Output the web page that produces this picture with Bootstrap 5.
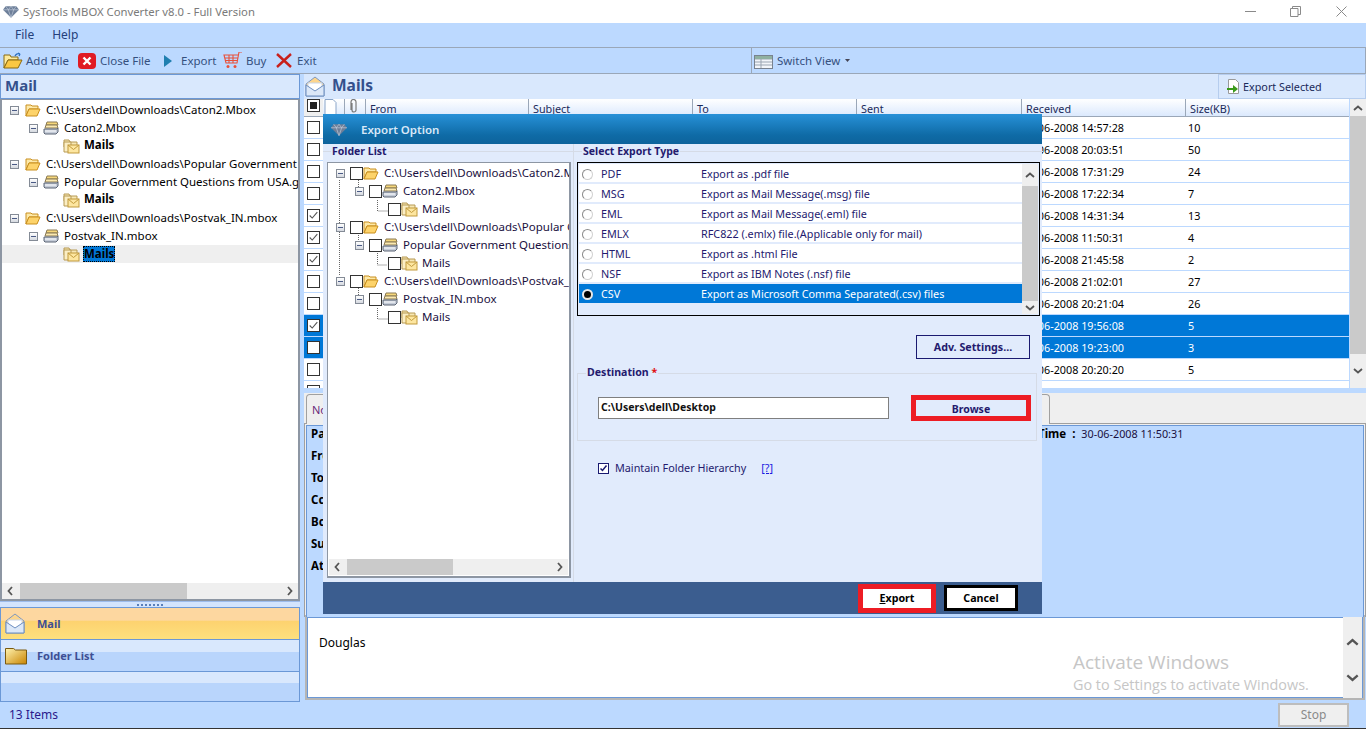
<!DOCTYPE html>
<html lang="en">
<head>
<meta charset="UTF-8">
<title>SysTools MBOX Converter v8.0 - Full Version</title>
<link href="https://cdn.jsdelivr.net/npm/bootstrap@5.3.0/dist/css/bootstrap.min.css" rel="stylesheet">
<style>
html, body { margin: 0; height: 729px; overflow: hidden; }
body { width: 1366px; position: relative; font-family: "Noto Sans", "Open Sans", sans-serif; font-size: 12px; line-height: 16px; color: #000; background: #bcd9ff; }
svg { display: block; flex: none; }
.tt { white-space: nowrap; }

.win-title { height: 23px; background: #fff; color: #7a7a7a; padding-left: 3px; font-size: 11.3px; }
.win-title .nm { margin-left: 4px; }
.win-btns { margin-left: auto; padding-right: 19px; }
.win-menu { height: 24px; color: #25407a; padding-left: 15px; gap: 18px; }
.win-tools { height: 27px; border: 1px solid #9aa7b8; border-left: 0; color: #35507e; padding-left: 3px; font-size: 11.5px; }
.tool-item { gap: 3px; }
.switch-view { gap: 4px; height: 100%; border-left: 1px solid #9aa7b8; padding-left: 2px; }
.win-main { height: 628px; }
.win-status { height: 27px; border-bottom: 1px solid #333; color: #2a1a8c; padding-left: 9px; }
.stop-btn { width: 71px; height: 24px; margin-left: auto; margin-right: 17px; background: #efefef; border: 2px solid #bdbdbd; color: #8a8a8a; text-align: center; line-height: 20px; }

.side-pane { width: 300px; flex: none; }
.pane-head { height: 25px; background: #d9e8fd; color: #34508c; font-weight: 700; font-size: 15px; line-height: 20px; }
.side-pane .pane-head { border: 1px solid #6b98d6; padding-left: 4px; }
.tree-box { height: 502px; background: #fff; border: 2px solid #8d96a3; border-top-width: 1px; padding-top: 1px; overflow: hidden; position: relative; font-size: 11.5px; }
.tree-rows { height: 482px; }
.trow { height: 18px; white-space: nowrap; overflow: hidden; }
.trow .exp { margin-left: 8px; }
.trow .lbl { margin-left: 5px; }
.lv2 { padding-left: 19px; }
.lv2 .exp { margin-right: 5px; }
.lv3 { padding-left: 61px; }
.trow.sel { background: #efefef; }
.trow b { font-weight: 700; padding: 0 1px; margin-left: 3px; margin-top: -2px; }
.trow.sel b { background: #0078d7; outline: 1px dotted #000; outline-offset: -1px; margin-top: 0; }
.exp { width: 9px; height: 9px; border: 1px solid #848b96; background: linear-gradient(#fff, #d5d9e0); position: relative; flex: none; margin-right: 6px; }
.exp::after { content: ""; position: absolute; left: 1px; right: 1px; top: 3px; height: 1px; background: #4a5a85; }
.scroll-h { height: 16px; background: #efefef; padding: 0 5px; }
.scroll-h .thumb { height: 100%; background: #cacaca; }
.splitter { height: 7px; background: #d3e4fd; border-top: 1px solid #9dbcec; border-bottom: 1px solid #6b98d6; gap: 2px; }
.splitter i { width: 2px; height: 2px; background: #5a7fb8; }
.nav-mail, .nav-folder { height: 32px; border: 1px solid #6b98d6; border-top: 0; padding-left: 4px; color: #3e4f94; font-weight: 700; gap: 12px; font-size: 11px; }
.nav-folder { gap: 10px; }
.nav-mail { background: linear-gradient(#fdd7a0 0, #fdd7a0 40%, #fdd26f 41%, #fde07e 100%); }
.nav-folder { background: linear-gradient(#d9e8fd 0, #d9e8fd 38%, #b9d5fc 39%, #b9d5fc 100%); }
.nav-blank { height: 30px; border: 1px solid #6b98d6; border-top: 0; background: linear-gradient(#d9e8fd 0, #d9e8fd 38%, #b9d5fc 39%, #b9d5fc 100%); }

.main-pane { width: 1062px; margin-left: 4px; flex: none; }
.main-pane .pane-head { padding-left: 1px; gap: 7px; font-size: 15.5px; }
.main-pane .pane-head > span { margin-top: -3px; }
.exp-sel { margin-left: auto; width: 148px; height: 100%; border: 1px solid #b6cdee; font-size: 10.8px; font-weight: 400; color: #1a2a5a; padding-left: 7px; gap: 2px; }
.grid-wrap { height: 289px; }
.mail-grid { width: 1046px; overflow: hidden; background: #fff; font-size: 10.8px; }
.ghead { height: 18px; background: linear-gradient(#fff, #dbe9fd); border-bottom: 1px solid #9aa7b8; color: #1a2a5a; line-height: 20px; }
.gc { height: 100%; border-left: 1px solid #9aa7b8; padding-left: 4px; white-space: nowrap; flex: none; }
.gc0 { width: 19px; border: 0; padding-left: 3px; background: #efefef; }
.mrow { height: 22px; border-bottom: 1px solid #bcd9ff; white-space: nowrap; }
.mrow .cbcell { width: 18px; flex: none; height: 100%; padding-left: 3px; }
.mrow .rcv { margin-left: 700px; width: 166px; flex: none; }
.mrow.pick { background: #0078d7; color: #fff; }
.mrow.pick .cbcell { background: #0078d7; }
.cbox { width: 13px; height: 13px; background: #fff; border: 1px solid #333; flex: none; }
.scroll-v { width: 16px; background: #efefef; flex: none; }
.scroll-v .thumb { background: #cacaca; flex: 1; }
.scroll-v .ar { height: 17px; }
.pane-gap { height: 5px; }
.tab-strip { height: 30px; background: #efefef; position: relative; color: #6a2a7a; font-size: 11px; }
.tab-one { position: absolute; left: 2px; top: 1px; width: 744px; height: 30px; background: #efefef; border: 1px solid #a0a0a0; border-bottom: 0; border-radius: 4px 4px 0 0; padding: 7px 0 0 5px; }
.info-frame { height: 194px; border: 1px solid #a0a0a0; border-bottom: 0; padding: 1px 1px 0; background: #efefef; }
.info-box { height: 100%; background: #bcd9ff; border: 1px solid #6b98d6; border-bottom: 0; padding: 0 0 0 4px; font-weight: 700; position: relative; font-size: 11.5px; }
.info-box p { margin: 0; height: 22px; line-height: 16px; }
.info-time { position: absolute; top: 0; left: 731px; white-space: nowrap; }
.info-time span { font-weight: 400; color: #1a1040; font-size: 10.8px; }
.body-box { height: 81px; background: #fff; border: 1px solid #6b98d6; outline: 2px solid #b5b5b5; margin: 0 3px 0 3px; padding: 17px 0 0 11px; font-size: 12px; }
.body-scroll { width: 19px; background: #efefef; position: absolute; right: 4px; top: 617px; height: 81px; }
.watermark { position: absolute; left: 1073px; top: 650px; color: #c6c6c6; font-family: "Open Sans", sans-serif; white-space: nowrap; }
.watermark div:first-child { font-size: 19px; line-height: 24px; }
.watermark div:last-child { font-size: 14.4px; line-height: 22px; }

.dlg { position: absolute; left: 323px; top: 114px; width: 719px; height: 500px; background: #e1ebfc; color: #241a6e; font-size: 10.8px; }
.dlg-head { height: 30px; background: linear-gradient(#2791d8, #0f6ba6 70%, #0d639c); color: #d8e8f8; font-weight: 600; font-size: 11.5px; padding: 2px 0 0 8px; gap: 14px; }
.dlg-body { height: 438px; }
.dlg-left { width: 251px; flex: none; position: relative; padding: 18px 0 0 4px; border-right: 1px solid #d5dbe6; height: 100%; }
.dlg-right { flex: 1; position: relative; padding: 18px 3px 0 3px; }
.lgd { position: absolute; top: 0; height: 14px; line-height: 14px; font-weight: 700; background: #e1ebfc; padding: 0 1px; font-size: 10.5px; white-space: nowrap; }
.rule { position: absolute; top: 7px; left: 0; right: 0; height: 1px; background: #d5dbe6; }
.dtree { width: 244px; height: 416px; background: #fff; border: 2px solid #8d96a3; border-width: 1px 2px 2px 1px; position: relative; padding-top: 1px; color: #1a1040; overflow: hidden; font-size: 11.5px; }
.drow { height: 18px; white-space: nowrap; overflow: hidden; position: relative; z-index: 1; }
.d1 { padding-left: 8px; }
.d2 { padding-left: 27px; }
.d3 { padding-left: 60px; }
.drow .exp { margin-right: 5px; }
.dtree .tt { margin-left: 5px; }
.tree-lines { position: absolute; left: 0; top: 0; }
.type-box { height: 154px; width: 463px; background: #e1ebfc; border: 1px solid #000; padding: 1px; }
.type-rows { flex: 1; }
.trow-x { height: 20px; background: #fff; border-bottom: 2px solid #e1ebfc; padding: 2px 0 0 3px; color: #241a6e; }
.trow-x .code { margin-left: 8px; width: 100px; flex: none; }
.trow-x.sel { background: #0078d7; color: #fff; height: 19px; border: 0; padding-top: 1px; }
.rb { width: 11px; height: 11px; border-radius: 50%; background: #fff; border: 1px solid #8a8a8a; border-bottom-color: #d0d0d0; border-right-color: #d0d0d0; flex: none; }
.trow-x.sel .rb { width: 11px; height: 11px; border: 2px solid #e8e8e8; background: #000; }
.adv-row { height: 62px; padding: 19px 9px 0 0; }
.adv-btn, .br-btn { font-weight: 700; text-align: center; background: #e1ebfc; }
.adv-btn { width: 114px; height: 24px; border: 1px solid #1a1a70; line-height: 22px; font-size: 10.7px; margin-right: 1px; }
.dest-set { width: 460px; height: 68px; border: 1px solid #d5dbe6; position: relative; padding: 23px 0 0 20px; margin-top: -5px; }
.dest-set .lgd { top: -9px; left: 8px; font-size: 10.6px; }
.dest-in { width: 291px; height: 22px; background: #fff; border: 1px solid #7f7f7f; font-weight: 700; color: #111; padding-left: 2px; line-height: 19px; font-size: 10.5px; }
.br-btn { width: 120px; height: 26px; margin-left: 22px; margin-top: -2px; border: 5px solid #ed1c24; line-height: 18px; font-size: 10.5px; }
.req { color: #e01010; }
.keep-row { padding: 19px 0 0 21px; gap: 6px; }
.keep-cb { width: 11px; height: 11px; background: #fff; border: 1px solid #1a1a70; flex: none; }
.help-lnk { color: #1a1ae0; text-decoration: underline; margin-left: 9px; }
.dlg-foot { height: 32px; background: #3b5d8f; padding-right: 24px; color: #000; font-weight: 700; font-size: 10.7px; }
.ex-btn { width: 78px; height: 29px; border: 5px solid #ed1c24; background: #fff; text-align: center; line-height: 19px; }
.can-btn { width: 74px; height: 26px; border: 3px solid #000; background: #fff; text-align: center; line-height: 20px; margin-left: 8px; }
</style>
</head>
<body>
<svg width="0" height="0" style="position:absolute">
  <defs>
    <symbol id="ic-open" viewBox="0 0 16 14"><path d="M1 2h5l1 1h6v3H4L1 13z" fill="#fde9a8" stroke="#c98f1e"/><path d="M1 13 4 6h11l-3 7z" fill="#fdd36a" stroke="#c98f1e"/></symbol>
    <symbol id="ic-stack" viewBox="0 0 16 14"><path d="M4 1h10l1 3H3z" fill="#f6d77a" stroke="#8a7a55"/><path d="M3 4h11l1 3H2z" fill="#fbe9b0" stroke="#8a7a55"/><path d="M1 8h13l1-1v4l-2 2H2l-1-1z" fill="#c5ccd8" stroke="#5b6474"/><path d="M2 10h11" stroke="#fff"/></symbol>
    <symbol id="ic-mailf" viewBox="0 0 17 15"><path d="M1 1h5l1 2h7v5H1z" fill="#f6e7b4" stroke="#b79a55"/><path d="M1 3v10h7V3z" fill="#fbeec4" stroke="#b79a55"/><rect x="5" y="6" width="11" height="8" fill="#fde6a0" stroke="#c19a3c"/><path d="m5 6 5.500 4.500L16 6" fill="none" stroke="#c19a3c"/></symbol>
    <symbol id="ic-env" viewBox="0 0 20 21"><path d="M1 8 10 1l9 7v12H1z" fill="#fdd58c" stroke="#7d97c0"/><path d="M3 7h14v6l-7 4-7-4z" fill="#fff" stroke="#c9d6ea"/><path d="M1 20V9l9 6 9-6v11z" fill="#dce8f8" stroke="#6c8ec0"/></symbol>
    <symbol id="ic-gem" viewBox="0 0 18 15"><path d="M3 1h12l3 4-9 9-9-9z" fill="#6d7f99"/><path d="M3 1 6 5l3-4 3 4 3-4M0 5h18M6 5l3 9 3-9" fill="none" stroke="#c6d0de" stroke-width=".7"/></symbol>
    <symbol id="ic-chk" viewBox="0 0 13 13"><path d="m2 6.500 3 3 6-7" fill="none" stroke="#555" stroke-width="1.300"/></symbol>
    <symbol id="ic-up" viewBox="0 0 10 6"><path d="M1 5 5 1.500 9 5" fill="none" stroke="#555" stroke-width="1.800"/></symbol>
    <symbol id="ic-dn" viewBox="0 0 10 6"><path d="M1 1l4 3.500L9 1" fill="none" stroke="#555" stroke-width="1.800"/></symbol>
    <symbol id="ic-lf" viewBox="0 0 6 10"><path d="M5 1 1.500 5 5 9" fill="none" stroke="#555" stroke-width="1.800"/></symbol>
    <symbol id="ic-rt" viewBox="0 0 6 10"><path d="M1 1l3.500 4L1 9" fill="none" stroke="#555" stroke-width="1.800"/></symbol>
  </defs>
</svg>

<div class="win-title d-flex align-items-center">
  <svg width="16" height="14"><use href="#ic-gem"/></svg>
  <span class="nm tt">SysTools MBOX Converter v8.0 - Full Version</span>
  <div class="win-btns d-flex align-items-center">
    <svg width="11" height="11" viewBox="0 0 11 11"><path d="M0 5.500h11" stroke="#8a8a8a"/></svg>
    <svg width="11" height="11" viewBox="0 0 11 11" style="margin-left:34px"><path d="M.5 2.500h7.500v8H.5zM2.500 2.500v-2h8v8H8" fill="none" stroke="#8a8a8a"/></svg>
    <svg width="11" height="11" viewBox="0 0 11 11" style="margin-left:35px"><path d="m.5.500 10 10m0-10-10 10" stroke="#8a8a8a"/></svg>
  </div>
</div>

<div class="win-menu d-flex align-items-center"><span>File</span><span>Help</span></div>

<div class="win-tools d-flex align-items-center">
  <div class="tool-item d-flex align-items-center" style="width:75px">
    <svg width="20" height="17" viewBox="0 0 20 17"><path d="M1 3h6l1 2h7v3H5l-4 8z" fill="#fdea9c" stroke="#8a6a12"/><path d="M1 16 5 8h14l-4 8z" fill="#fbc843" stroke="#8a6a12"/><path d="M12 4c1-2 3-3 5-2m0 0-2-1m2 1-1 2" fill="none" stroke="#2a6ec0" stroke-width="1.300"/></svg>
    <span class="tt">Add File</span>
  </div>
  <div class="tool-item d-flex align-items-center" style="width:86px;gap:4px">
    <svg width="18" height="16" viewBox="0 0 18 16"><rect width="18" height="16" rx="4" fill="#e01b24"/><path d="m5.500 4.500 7 7m0-7-7 7" stroke="#fff" stroke-width="2.400"/></svg>
    <span class="tt">Close File</span>
  </div>
  <div class="tool-item d-flex align-items-center" style="width:59px;gap:9px">
    <svg width="8" height="12" viewBox="0 0 8 12"><path d="M0 0 8 6 0 12z" fill="#1f7fb0"/></svg>
    <span class="tt">Export</span>
  </div>
  <div class="tool-item d-flex align-items-center" style="width:53px">
    <svg width="20" height="17" viewBox="0 0 20 17"><path d="M19 0h-3l-2 11H3L1 3h14M2 6h12.500M2.500 8.500H14M6 3v8M10 3v8" fill="none" stroke="#e8503a" stroke-width="1.100"/><circle cx="5" cy="14.500" r="1.500" fill="#e8503a"/><circle cx="12" cy="14.500" r="1.500" fill="#e8503a"/></svg>
    <span class="tt">Buy</span>
  </div>
  <div class="tool-item d-flex align-items-center" style="width:475px;gap:5px">
    <svg width="16" height="15" viewBox="0 0 16 15"><path d="m1 1 14 13m0-13L1 14" stroke="#c8201c" stroke-width="2.400"/></svg>
    <span class="tt">Exit</span>
  </div>
  <div class="switch-view d-flex align-items-center">
    <svg width="19" height="16" viewBox="0 0 19 16"><rect x=".5" y="2.500" width="18" height="13" fill="#f2f5f9" stroke="#78828f"/><path d="M1 6h17M7 3v12M1 9h17M1 12h17" stroke="#9aa5b2"/><rect x="1" y="3" width="17" height="3" fill="#8fb0a0"/></svg>
    <span class="tt">Switch View</span>
    <svg width="5" height="3" viewBox="0 0 5 3" style="margin-left:1px"><path d="M0 0h5L2.500 3z" fill="#445"/></svg>
  </div>
</div>

<div class="win-main d-flex">
  <div class="side-pane">
    <div class="pane-head">Mail</div>
    <div class="tree-box">
      <div class="tree-rows">
        <div class="trow d-flex align-items-center"><span class="exp"></span><svg width="16" height="14"><use href="#ic-open"/></svg><span class="lbl">C:\Users\dell\Downloads\Caton2.Mbox</span></div>
        <div class="trow lv2 d-flex align-items-center"><span class="exp"></span><svg width="16" height="14"><use href="#ic-stack"/></svg><span class="lbl">Caton2.Mbox</span></div>
        <div class="trow lv3 d-flex align-items-center"><svg width="17" height="15"><use href="#ic-mailf"/></svg><b>Mails</b></div>
        <div class="trow d-flex align-items-center"><span class="exp"></span><svg width="16" height="14"><use href="#ic-open"/></svg><span class="lbl">C:\Users\dell\Downloads\Popular Government Questions from USA.gov.mbox</span></div>
        <div class="trow lv2 d-flex align-items-center"><span class="exp"></span><svg width="16" height="14"><use href="#ic-stack"/></svg><span class="lbl">Popular Government Questions from USA.gov.mbox</span></div>
        <div class="trow lv3 d-flex align-items-center"><svg width="17" height="15"><use href="#ic-mailf"/></svg><b>Mails</b></div>
        <div class="trow d-flex align-items-center"><span class="exp"></span><svg width="16" height="14"><use href="#ic-open"/></svg><span class="lbl">C:\Users\dell\Downloads\Postvak_IN.mbox</span></div>
        <div class="trow lv2 d-flex align-items-center"><span class="exp"></span><svg width="16" height="14"><use href="#ic-stack"/></svg><span class="lbl">Postvak_IN.mbox</span></div>
        <div class="trow lv3 sel d-flex align-items-center"><svg width="17" height="15"><use href="#ic-mailf"/></svg><b>Mails</b></div>
      </div>
      <div class="scroll-h d-flex align-items-center">
        <svg width="6" height="10"><use href="#ic-lf"/></svg>
        <div class="thumb" style="width:167px;margin-left:7px"></div>
        <svg width="6" height="10" class="ms-auto"><use href="#ic-rt"/></svg>
      </div>
    </div>
    <div class="splitter d-flex justify-content-center align-items-center"><i></i><i></i><i></i><i></i><i></i><i></i><i></i></div>
    <div class="nav-mail d-flex align-items-center"><svg width="20" height="21"><use href="#ic-env"/></svg><span>Mail</span></div>
    <div class="nav-folder d-flex align-items-center">
      <svg width="22" height="18" viewBox="0 0 22 18"><path d="M.5 3V1.500h8l2 1.500h11v14H.5z" fill="url(#fg)" stroke="#7a5a10"/><defs><linearGradient id="fg" x1="0" y1="0" x2="1" y2="1"><stop offset="0" stop-color="#fff3b0"/><stop offset="1" stop-color="#c98400"/></linearGradient></defs></svg>
      <span>Folder List</span>
    </div>
    <div class="nav-blank"></div>
  </div>

  <div class="main-pane">
    <div class="pane-head d-flex align-items-center">
      <svg width="20" height="21"><use href="#ic-env"/></svg><span>Mails</span>
      <div class="exp-sel d-flex align-items-center">
        <svg width="15" height="15" viewBox="0 0 15 15"><path d="M2.500.500h7l3 3v11h-10z" fill="#fff" stroke="#9a9a9a"/><path d="M1 9h6V6l5 4-5 4v-3H1z" fill="#3a9a1a"/></svg>
        <span class="tt">Export Selected</span>
      </div>
    </div>
    <div class="grid-wrap d-flex">
      <div class="mail-grid">
        <div class="ghead d-flex">
          <div class="gc gc0"><span class="cbox d-flex align-items-center justify-content-center"><svg width="7" height="7"><rect width="7" height="7" fill="#222"/></svg></span></div>
          <div class="gc" style="width:21px;border:0;padding-left:1px"><svg width="13" height="16" viewBox="0 0 13 16"><path d="M1 .500h8l3 3v12H1z" fill="#fff" stroke="#8aa5c8"/></svg></div>
          <div class="gc" style="width:21px;padding-left:4px"><svg width="10" height="15" viewBox="0 0 10 15"><path d="M3 4v7a2 2 0 0 0 4 0V3a2.500 2.500 0 0 0-5 0v8" fill="none" stroke="#7b7b7b" stroke-width="1.200"/></svg></div>
          <div class="gc" style="width:163px">From</div>
          <div class="gc" style="width:164px">Subject</div>
          <div class="gc" style="width:164px">To</div>
          <div class="gc" style="width:165px">Sent</div>
          <div class="gc" style="width:164px">Received</div>
          <div class="gc" style="width:165px;border-right:0">Size(KB)</div>
        </div>
        <div class="mrow d-flex align-items-center"><span class="cbcell d-flex align-items-center"><span class="cbox"></span></span><span class="rcv">30-06-2008 14:57:28</span><span>10</span></div>
        <div class="mrow d-flex align-items-center"><span class="cbcell d-flex align-items-center"><span class="cbox"></span></span><span class="rcv">30-06-2008 20:03:51</span><span>50</span></div>
        <div class="mrow d-flex align-items-center"><span class="cbcell d-flex align-items-center"><span class="cbox"></span></span><span class="rcv">30-06-2008 17:31:29</span><span>24</span></div>
        <div class="mrow d-flex align-items-center"><span class="cbcell d-flex align-items-center"><span class="cbox"></span></span><span class="rcv">30-06-2008 17:22:34</span><span>7</span></div>
        <div class="mrow d-flex align-items-center"><span class="cbcell d-flex align-items-center"><span class="cbox"><svg width="11" height="11"><use href="#ic-chk"/></svg></span></span><span class="rcv">30-06-2008 14:31:34</span><span>13</span></div>
        <div class="mrow d-flex align-items-center"><span class="cbcell d-flex align-items-center"><span class="cbox"><svg width="11" height="11"><use href="#ic-chk"/></svg></span></span><span class="rcv">30-06-2008 11:50:31</span><span>4</span></div>
        <div class="mrow d-flex align-items-center"><span class="cbcell d-flex align-items-center"><span class="cbox"><svg width="11" height="11"><use href="#ic-chk"/></svg></span></span><span class="rcv">30-06-2008 21:45:58</span><span>2</span></div>
        <div class="mrow d-flex align-items-center"><span class="cbcell d-flex align-items-center"><span class="cbox"></span></span><span class="rcv">30-06-2008 21:02:01</span><span>27</span></div>
        <div class="mrow d-flex align-items-center"><span class="cbcell d-flex align-items-center"><span class="cbox"></span></span><span class="rcv">30-06-2008 20:21:04</span><span>26</span></div>
        <div class="mrow pick d-flex align-items-center"><span class="cbcell d-flex align-items-center"><span class="cbox"><svg width="11" height="11"><use href="#ic-chk"/></svg></span></span><span class="rcv">30-06-2008 19:56:08</span><span>5</span></div>
        <div class="mrow pick d-flex align-items-center"><span class="cbcell d-flex align-items-center"><span class="cbox"></span></span><span class="rcv">30-06-2008 19:23:00</span><span>3</span></div>
        <div class="mrow d-flex align-items-center"><span class="cbcell d-flex align-items-center"><span class="cbox"></span></span><span class="rcv">30-06-2008 20:20:20</span><span>5</span></div>
        <div class="mrow d-flex align-items-center"><span class="cbcell d-flex align-items-center"><span class="cbox"></span></span></div>
      </div>
      <div class="scroll-v d-flex flex-column" style="margin-left:1px">
        <div class="ar d-flex align-items-center justify-content-center"><svg width="10" height="6"><use href="#ic-up"/></svg></div>
        <div class="thumb"></div>
        <div class="ar d-flex align-items-center justify-content-center" style="height:34px"><svg width="10" height="6"><use href="#ic-dn"/></svg></div>
      </div>
    </div>
    <div class="pane-gap"></div>
    <div class="tab-strip"><div class="tab-one">Normal Mail View</div></div>
    <div class="info-frame">
      <div class="info-box">
        <p>Path</p><p>From</p><p>To</p><p>Cc</p><p>Bcc</p><p>Subject</p><p>Attachments</p>
        <div class="info-time">Time&nbsp; :&nbsp; <span>30-06-2008 11:50:31</span></div>
      </div>
    </div>
    <div class="body-box">Douglas</div>
  </div>
</div>

<div class="win-status d-flex align-items-center"><span>13 Items</span><div class="stop-btn">Stop</div></div>

<div class="body-scroll d-flex flex-column align-items-center">
  <svg width="13" height="8" style="margin-top:21px"><use href="#ic-up"/></svg>
  <svg width="13" height="8" style="margin-top:28px"><use href="#ic-dn"/></svg>
</div>
<div class="watermark"><div>Activate Windows</div><div>Go to Settings to activate Windows.</div></div>

<div class="dlg d-flex flex-column">
  <div class="dlg-head d-flex align-items-center">
    <svg width="16" height="14"><use href="#ic-gem"/></svg><span>Export Option</span>
  </div>
  <div class="dlg-body d-flex">
    <div class="dlg-left">
      <div class="rule"></div>
      <div class="lgd" style="left:8px">Folder List</div>
      <div class="dtree">
        <svg class="tree-lines" width="120" height="170" viewBox="0 0 120 170"><path d="M11.500 17v95M30.500 17v7M49.500 37v11h10M30.500 70v7M49.500 90v12h10M30.500 125v7M49.500 145v11h10" fill="none" stroke="#666" stroke-dasharray="1 1"/></svg>
        <div class="drow d1 d-flex align-items-center"><span class="exp"></span><span class="cbox"></span><svg width="16" height="14"><use href="#ic-open"/></svg><span class="tt">C:\Users\dell\Downloads\Caton2.Mbox</span></div>
        <div class="drow d2 d-flex align-items-center"><span class="exp"></span><span class="cbox"></span><svg width="16" height="14"><use href="#ic-stack"/></svg><span class="tt">Caton2.Mbox</span></div>
        <div class="drow d3 d-flex align-items-center"><span class="cbox"></span><svg width="17" height="15"><use href="#ic-mailf"/></svg><span class="tt" style="margin-left:4px">Mails</span></div>
        <div class="drow d1 d-flex align-items-center"><span class="exp"></span><span class="cbox"></span><svg width="16" height="14"><use href="#ic-open"/></svg><span class="tt">C:\Users\dell\Downloads\Popular Government</span></div>
        <div class="drow d2 d-flex align-items-center"><span class="exp"></span><span class="cbox"></span><svg width="16" height="14"><use href="#ic-stack"/></svg><span class="tt">Popular Government Questions from USA.gov</span></div>
        <div class="drow d3 d-flex align-items-center"><span class="cbox"></span><svg width="17" height="15"><use href="#ic-mailf"/></svg><span class="tt" style="margin-left:4px">Mails</span></div>
        <div class="drow d1 d-flex align-items-center"><span class="exp"></span><span class="cbox"></span><svg width="16" height="14"><use href="#ic-open"/></svg><span class="tt">C:\Users\dell\Downloads\Postvak_IN.mbox</span></div>
        <div class="drow d2 d-flex align-items-center"><span class="exp"></span><span class="cbox"></span><svg width="16" height="14"><use href="#ic-stack"/></svg><span class="tt">Postvak_IN.mbox</span></div>
        <div class="drow d3 d-flex align-items-center"><span class="cbox"></span><svg width="17" height="15"><use href="#ic-mailf"/></svg><span class="tt" style="margin-left:4px">Mails</span></div>
        <div class="scroll-h d-flex align-items-center" style="position:absolute;left:1px;right:1px;bottom:1px">
          <svg width="6" height="10"><use href="#ic-lf"/></svg>
          <div class="thumb" style="width:106px;margin-left:7px"></div>
          <svg width="6" height="10" class="ms-auto"><use href="#ic-rt"/></svg>
        </div>
      </div>
    </div>
    <div class="dlg-right">
      <div class="rule"></div>
      <div class="lgd" style="left:8px">Select Export Type</div>
      <div class="type-box d-flex">
        <div class="type-rows">
          <div class="trow-x d-flex align-items-center"><span class="rb"></span><span class="code">PDF</span><span class="tt">Export as .pdf file</span></div>
          <div class="trow-x d-flex align-items-center"><span class="rb"></span><span class="code">MSG</span><span class="tt">Export as Mail Message(.msg) file</span></div>
          <div class="trow-x d-flex align-items-center"><span class="rb"></span><span class="code">EML</span><span class="tt">Export as Mail Message(.eml) file</span></div>
          <div class="trow-x d-flex align-items-center"><span class="rb"></span><span class="code">EMLX</span><span class="tt">RFC822 (.emlx) file.(Applicable only for mail)</span></div>
          <div class="trow-x d-flex align-items-center"><span class="rb"></span><span class="code">HTML</span><span class="tt">Export as .html File</span></div>
          <div class="trow-x d-flex align-items-center"><span class="rb"></span><span class="code">NSF</span><span class="tt">Export as IBM Notes (.nsf) file</span></div>
          <div class="trow-x sel d-flex align-items-center"><span class="rb"></span><span class="code">CSV</span><span class="tt">Export as Microsoft Comma Separated(.csv) files</span></div>
        </div>
        <div class="scroll-v d-flex flex-column">
          <div class="ar d-flex align-items-center justify-content-center" style="height:22px"><svg width="10" height="6"><use href="#ic-up"/></svg></div>
          <div class="thumb"></div>
          <div class="ar d-flex align-items-center justify-content-center" style="height:13px"><svg width="10" height="6"><use href="#ic-dn"/></svg></div>
        </div>
      </div>
      <div class="adv-row d-flex justify-content-end"><div class="adv-btn">Adv. Settings...</div></div>
      <div class="dest-set d-flex">
        <div class="lgd">Destination <span class="req">*</span></div>
        <div class="dest-in">C:\Users\dell\Desktop</div>
        <div class="br-btn">Browse</div>
      </div>
      <div class="keep-row d-flex align-items-center">
        <span class="keep-cb"><svg width="9" height="9" viewBox="0 0 9 9"><path d="m1.500 4.500 2 2 4-5" fill="none" stroke="#1a1a70" stroke-width="1.500"/></svg></span>
        <span class="tt">Maintain Folder Hierarchy</span>
        <span class="help-lnk">[?]</span>
      </div>
    </div>
  </div>
  <div class="dlg-foot d-flex justify-content-end align-items-center">
    <div class="ex-btn"><u>E</u>xport</div>
    <div class="can-btn">Cancel</div>
  </div>
</div>
<script src="https://cdn.jsdelivr.net/npm/bootstrap@5.3.0/dist/js/bootstrap.bundle.min.js"></script>
</body>
</html>
